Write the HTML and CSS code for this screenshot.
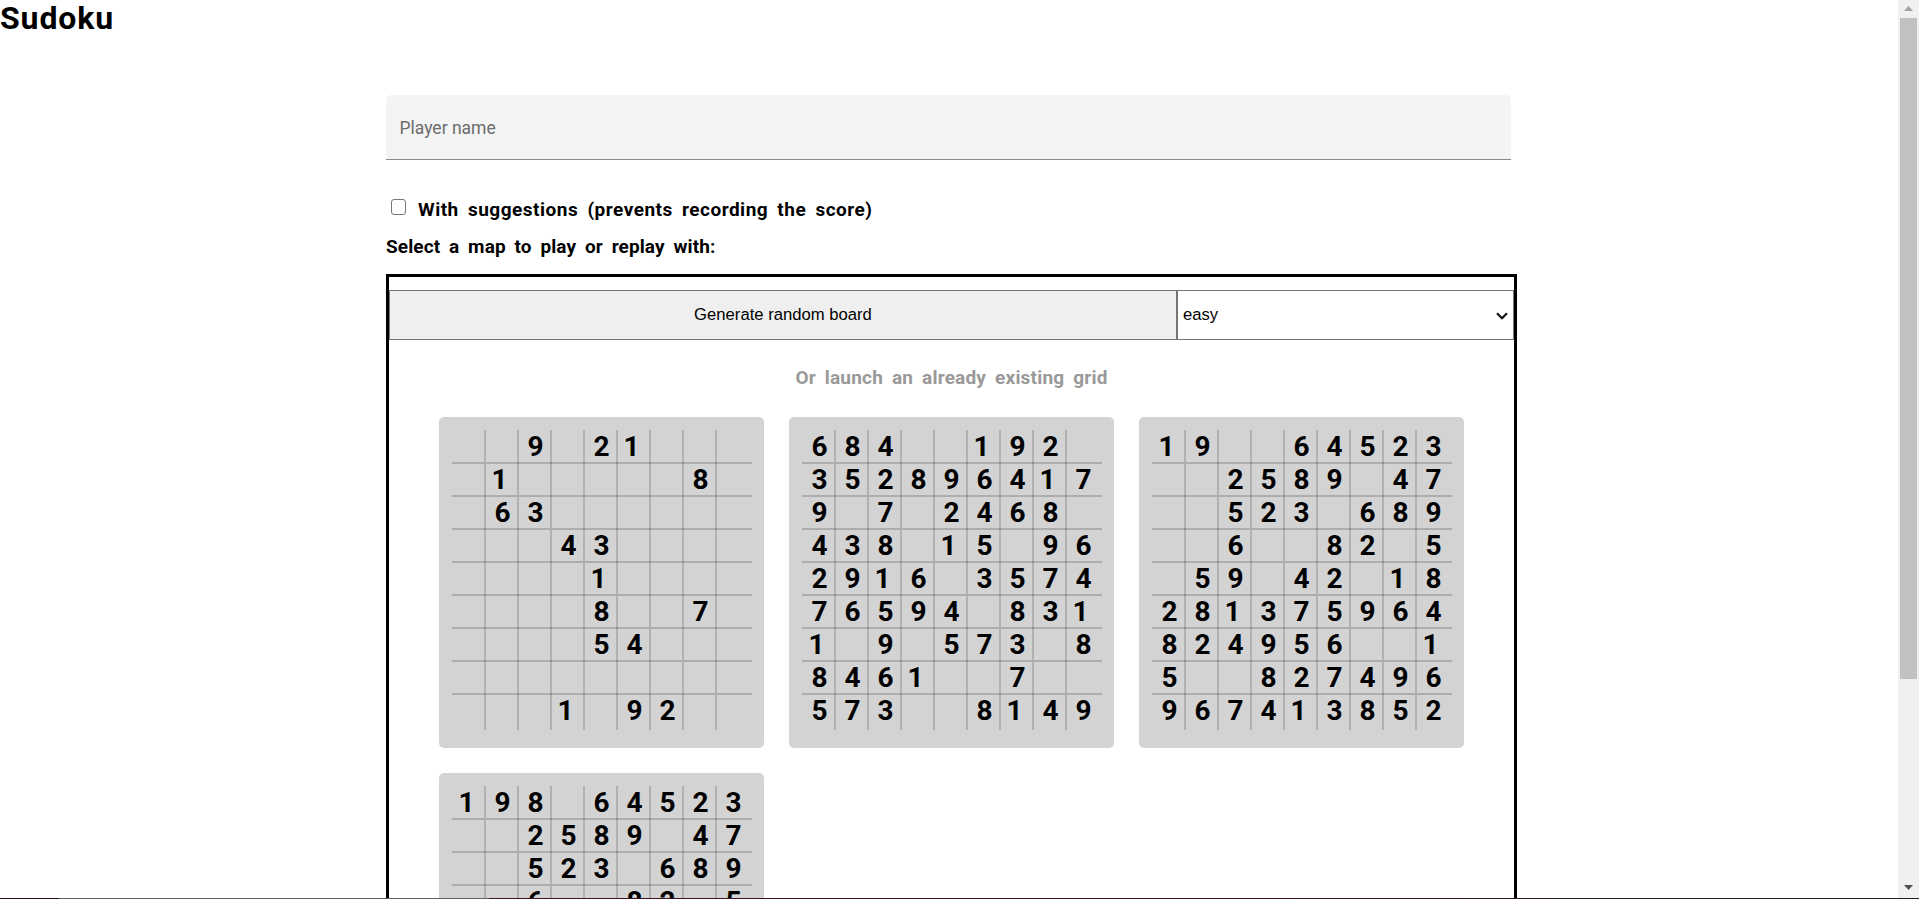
FILE: index.html
```html
<!DOCTYPE html>
<html lang="en">
<head>
<meta charset="utf-8">
<title>Sudoku</title>
<link rel="stylesheet" href="styles.css">
</head>
<body>
<div class="window">
  <div class="page">
    <h1 class="title"><span>Sudoku</span></h1>
    <main class="content">
      <div class="field">Player name</div>
      <label class="option"><span class="box"></span><span class="option-text">With suggestions (prevents recording the score)</span></label>
      <p class="prompt"><span>Select a map to play or replay with:</span></p>
      <section class="maps">
        <div class="controls">
          <button class="generate" type="button">Generate random board</button>
          <div class="level"><span>easy</span>
            <svg class="chevron" width="12" height="8" viewBox="0 0 12 8"><path d="M1 1.200 6 6.200 11 1.200" fill="none" stroke="#111" stroke-width="2.2"/></svg>
          </div>
        </div>
        <p class="hint"><span>Or launch an already existing grid</span></p>
        <div class="boards" id="boards"></div>
      </section>
    </main>
  </div>
  <div class="scrollbar">
    <svg class="arrow" width="9" height="5" viewBox="0 0 9 5"><path d="M0 5 4.500 0 9 5Z" fill="#a3a3a3"/></svg>
    <div class="thumb"></div>
    <svg class="arrow down" width="9" height="5" viewBox="0 0 9 5"><path d="M0 0 4.500 5 9 0Z" fill="#505050"/></svg>
  </div>
</div>
<div class="edge"></div>
<script src="boards.js"></script>
</body>
</html>
```
FILE: styles.css
```css
* { box-sizing: border-box; }
body {
  margin: 0;
  height: 899px;
  overflow: hidden;
  background: #fff;
  color: #000;
  font-family: Roboto, sans-serif;
}
.window { display: flex; height: 899px; overflow: hidden; }
.page { flex: 1; height: 899px; overflow: hidden; }
.title {
  margin: 0;
  height: 95px;
  font-size: 32px;
  line-height: 37px;
  font-weight: 700;
  letter-spacing: 0.9px;
}
.content { width: 1125px; margin-left: 386px; }
.field {
  height: 65px;
  padding-left: 13.5px;
  border-bottom: 1px solid #8a8a8a;
  border-radius: 5px 5px 0 0;
  background: #f4f4f4;
  color: #6c6c6c;
  font: 17.5px/66px Roboto, sans-serif;
}
.option {
  display: flex;
  height: 31px;
  margin-top: 34px;
  padding: 5px 0 0 5px;
}
.box {
  width: 15px;
  height: 16px;
  border: 1px solid #767676;
  border-radius: 3px;
}
.option-text {
  margin-left: 12px;
  font-size: 19px;
  line-height: 22px;
  font-weight: 700;
  letter-spacing: 0.5px;
  word-spacing: 4px;
}
.prompt {
  margin: 11px 0 0;
  height: 38px;
  font-size: 19px;
  line-height: 22px;
  font-weight: 700;
  letter-spacing: 0.1px;
  word-spacing: 4px;
}
.maps {
  width: 1131px;
  height: 900px;
  padding-top: 13px;
  border: 3px solid #000;
}
.controls { display: flex; height: 50px; }
.generate {
  width: 788px;
  padding: 0;
  border: 1px solid #767676;
  border-radius: 0;
  background: #efefef;
  color: #000;
  font: 16.667px "Liberation Sans", Arial, sans-serif;
}
.level {
  display: flex;
  flex: 1;
  justify-content: space-between;
  align-items: center;
  padding: 0 5px 0 5px;
  border: 1px solid #767676;
  font: 16.667px "Liberation Sans", Arial, sans-serif;
}
.chevron { margin-top: 1px; }
.hint {
  margin: 25px 0 0;
  height: 52px;
  text-align: center;
  color: #999;
  font-size: 19px;
  line-height: 26px;
  font-weight: 700;
  letter-spacing: 0.2px;
  word-spacing: 4px;
}
.boards {
  display: grid;
  grid-template-columns: repeat(3, 325px);
  gap: 25px;
  padding-left: 50px;
}
.board {
  height: 331px;
  padding: 13px;
  border-radius: 5px;
  background: #d3d3d3;
}
.board svg { display: block; overflow: visible; }
.lines { stroke: #000; stroke-opacity: 0.18; stroke-width: 1.8; }
.digit { font: 700 28px Roboto, sans-serif; text-anchor: middle; }
.scrollbar {
  width: 21px;
  height: 899px;
  padding-top: 6px;
  background: #f0f0f0;
}
.arrow { display: block; margin-left: 6px; }
.thumb { width: 17px; height: 661px; margin: 7px 0 206px 2px; background: #c1c1c1; }
.edge {
  position: absolute;
  left: 0;
  top: 898px;
  width: 1919px;
  height: 1px;
  background: linear-gradient(90deg, #2c0a1a 59px, #606060 59px 489px, #3a1424 489px 1250px, #202020 1850px);
}
```
FILE: boards.js
```js
const boards = [
  ["  9 21   ", " 1     8 ", " 63      ", "   43    ", "    1    ", "    8  7 ", "    54   ", "         ", "   1 92  "],
  ["684  192 ", "352896417", "9 7 2468 ", "438 15 96", "2916 3574", "76594 831", "1 9 573 8", "8461  7  ", "573  8149"],
  ["19  64523", "  2589 47", "  523 689", "  6  82 5", " 59 42 18", "281375964", "824956  1", "5  827496", "967413852"],
  ["198 64523", "  2589 47", "  523 689", "  6  82 5"]
];

const step = 33;

function drawBoard(rows) {
  let lines = "";
  let digits = "";
  for (let i = 1; i < 9; i++) {
    const p = i * step;
    lines += `<path d="M${p} 0V300M0 ${p}H300"/>`;
  }
  rows.forEach((row, r) => {
    [...row].forEach((d, c) => {
      if (d === " ") return;
      const x = c * step + (d === "1" ? 14.5 : 17.6);
      digits += `<text class="digit" x="${x}" y="${r * step + 26.3}">${d}</text>`;
    });
  });
  return `<div class="board"><svg width="300" height="300"><g class="lines">${lines}</g>${digits}</svg></div>`;
}

document.getElementById("boards").innerHTML = boards.map(drawBoard).join("");
```
